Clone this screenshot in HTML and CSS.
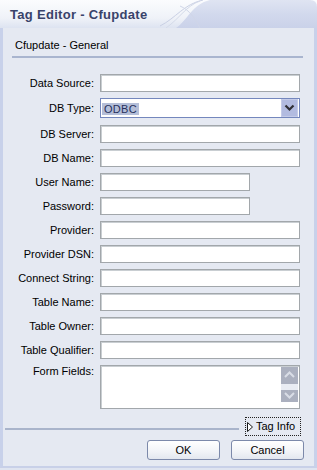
FILE: index.html
```html
<!DOCTYPE html>
<html>
<head>
<meta charset="utf-8">
<link rel="stylesheet" href="styles.css">
</head>
<body>
<div class="window">
  <div class="titlebar">
    <svg class="title-deco" width="317" height="28" viewBox="0 0 317 28">
      <defs>
        <linearGradient id="lg" x1="0" y1="0" x2="0" y2="1">
          <stop offset="0" stop-color="#fbfcfe"/>
          <stop offset="0.65" stop-color="#eff2f8"/>
          <stop offset="1" stop-color="#dde3f1"/>
        </linearGradient>
        <linearGradient id="rg" x1="0" y1="0" x2="0" y2="1">
          <stop offset="0" stop-color="#dfe4f2"/>
          <stop offset="0.5" stop-color="#d2d9ed"/>
          <stop offset="1" stop-color="#cad2e9"/>
        </linearGradient>
      </defs>
      <rect x="0" y="0" width="317" height="28" fill="url(#lg)"/>
      <path d="M176 28 C188 20 192 4 210 0 L310 0 Q317 0 317 7 L317 28 Z" fill="url(#rg)"/>
      <path d="M160 26 C176 18 184 4 203 0" fill="none" stroke="#c9d0e4" stroke-width="1"/>
      <path d="M166 28 C180 18 186 6 200 1" fill="none" stroke="#d4dae9" stroke-width="1"/>
      <path d="M180 6 C190 10 196 20 200 28" fill="none" stroke="#d0d6e8" stroke-width="1"/>
    </svg>
    <span class="title">Tag Editor - Cfupdate</span>
  </div>
  <div class="frame">
    <div class="heading">Cfupdate - General</div>
    <div class="form">
      <label class="lbl">Data Source:</label><div class="input"></div>
      <label class="lbl">DB Type:</label>
      <div class="select">
        <span class="sel-value">ODBC</span>
        <span class="sel-btn">
          <svg width="15" height="17" viewBox="0 0 15 17"><path d="M3.5 6.5 L7.5 10.5 L11.5 6.5" fill="none" stroke="#2f2f35" stroke-width="2.2"/></svg>
        </span>
      </div>
      <label class="lbl">DB Server:</label><div class="input"></div>
      <label class="lbl">DB Name:</label><div class="input"></div>
      <label class="lbl">User Name:</label><div class="input short"></div>
      <label class="lbl">Password:</label><div class="input short"></div>
      <label class="lbl">Provider:</label><div class="input"></div>
      <label class="lbl">Provider DSN:</label><div class="input"></div>
      <label class="lbl">Connect String:</label><div class="input"></div>
      <label class="lbl">Table Name:</label><div class="input"></div>
      <label class="lbl">Table Owner:</label><div class="input"></div>
      <label class="lbl">Table Qualifier:</label><div class="input"></div>
      <label class="lbl top">Form Fields:</label>
      <div class="textarea">
        <div class="ta-text"></div>
        <svg class="scroll" width="17" height="35" viewBox="0 0 17 35">
          <rect x="0" y="0" width="17" height="35" fill="#e9ecf3"/>
          <rect x="0" y="0" width="17" height="17" fill="#abb0bf"/>
          <rect x="0" y="23" width="17" height="12" fill="#abb0bf"/>
          <path d="M4 10 L8.5 5.5 L13 10" fill="none" stroke="#d9dde6" stroke-width="2"/>
          <path d="M4 26 L8.5 30.5 L13 26" fill="none" stroke="#d9dde6" stroke-width="2"/>
          <path d="M3 17 L8.5 13 L14 17 Z" fill="#abb0bf"/>
          <path d="M3 23 L8.5 27 L14 23 Z" fill="#abb0bf"/>
        </svg>
      </div>
    </div>
    <div class="info-row">
      <div class="sep"></div>
      <div class="taginfo">
        <svg class="tri" width="6" height="10" viewBox="0 0 6 10"><path d="M0.5 0.5 L5.5 5 L0.5 9.5 Z" fill="#fff" stroke="#1a1a1a" stroke-width="1"/></svg>
        <span>Tag Info</span>
      </div>
    </div>
    <div class="buttons">
      <button class="btn">OK</button>
      <button class="btn">Cancel</button>
    </div>
  </div>
</div>
</body>
</html>
```

FILE: styles.css
```css
html, body {
  margin: 0;
  padding: 0;
}
body {
  width: 317px;
  height: 470px;
  overflow: hidden;
  font-family: "Liberation Sans", Arial, sans-serif;
  font-size: 11px;
  color: #000;
  background: #dfe4f0;
}
.window {
  width: 317px;
  height: 470px;
  display: flex;
  flex-direction: column;
  padding-bottom: 2px;
  box-sizing: border-box;
}
.titlebar {
  position: relative;
  height: 28px;
  flex: none;
  padding: 7px 0 0 10px;
  box-sizing: border-box;
}
.title-deco {
  position: absolute;
  left: 0;
  top: 0;
  display: block;
}
.title {
  position: relative;
  font-weight: bold;
  font-size: 13px;
  line-height: 15px;
  letter-spacing: 0.3px;
  color: #39436a;
  display: block;
}
.frame {
  flex: 1;
  background: #e5e9f2;
  border-left: 3px solid #c8d1ea;
  border-right: 3px solid #c8d1ea;
  border-bottom: 2px solid #c8d0e8;
  display: flex;
  flex-direction: column;
}
.heading {
  margin: 11px 11px 0 9px;
  padding: 0 0 4px 3px;
  line-height: 13px;
  border-bottom: 2px solid #a9b5cf;
}
.form {
  margin-top: 16px;
  display: grid;
  grid-template-columns: 91px 200px;
  column-gap: 6px;
  row-gap: 6px;
  align-items: center;
}
.lbl {
  text-align: right;
  line-height: 13px;
  white-space: nowrap;
}
.lbl.top {
  align-self: start;
}
.input {
  height: 18px;
  box-sizing: border-box;
  background: #fff;
  border: 1px solid #a2a7ab;
  box-shadow: inset 1px 1px 0 #c9ced2;
}
.input.short {
  width: 150px;
}
.select {
  height: 20px;
  margin-bottom: 1px;
  box-sizing: border-box;
  background: #fff;
  border: 1px solid #7487bd;
  display: flex;
  align-items: center;
  padding: 0 1px 0 1px;
}
.sel-value {
  background: #b4bed8;
  color: #27315c;
  line-height: 12px;
  padding: 0 2px 0 2px;
  margin-top: 1px;
  letter-spacing: 0.3px;
}
.sel-btn {
  margin-left: auto;
  width: 15px;
  height: 16px;
  background: #b2bbe0;
  border: 1px solid #c4cbe8;
  box-sizing: content-box;
  display: flex;
}
.sel-btn svg {
  display: block;
  margin-top: -1px;
}
.textarea {
  height: 44px;
  box-sizing: border-box;
  background: #fff;
  border: 1px solid #a2a7ab;
  box-shadow: inset 1px 1px 0 #c9ced2;
  display: flex;
  align-items: flex-start;
  padding: 1px 1px 0 0;
}
.ta-text {
  flex: 1;
}
.scroll {
  display: block;
}
.info-row {
  margin: 8px 13px 0 2px;
  display: flex;
  align-items: flex-start;
  gap: 6px;
}
.sep {
  flex: 1;
  height: 2px;
  margin-top: 11px;
  background: #a9b4cb;
}
.taginfo {
  width: 56px;
  height: 19px;
  box-sizing: border-box;
  border: 1px dotted #222;
  display: flex;
  align-items: center;
  gap: 3px;
  padding-left: 1px;
  line-height: 13px;
}
.tri {
  display: block;
}
.buttons {
  margin-top: 4px;
  display: flex;
  justify-content: flex-end;
  gap: 11px;
  padding-right: 10px;
}
.btn {
  width: 73px;
  height: 20px;
  margin: 0;
  padding: 0;
  font-family: "Liberation Sans", Arial, sans-serif;
  font-size: 11px;
  color: #000;
  border: 1px solid #7c89aa;
  border-radius: 3px;
  background: linear-gradient(#ffffff, #f1f3f7 60%, #e3e7ef);
  line-height: 18px;
}
```
